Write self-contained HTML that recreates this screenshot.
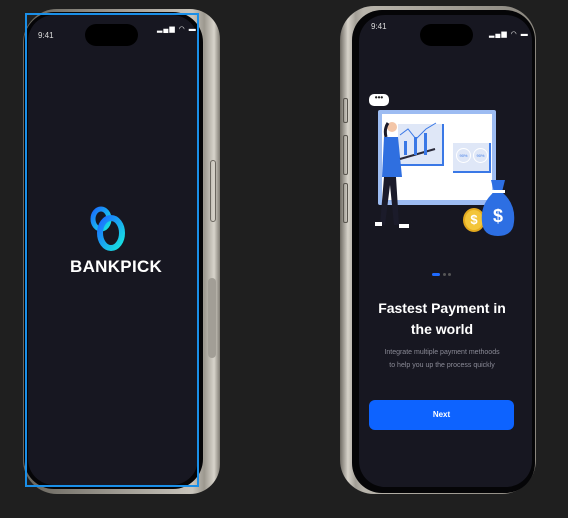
<!DOCTYPE html>
<html><head><style>
*{margin:0;padding:0;box-sizing:border-box}
body{width:568px;height:518px;background:#1f1f1f;position:relative;overflow:hidden;font-family:"Liberation Sans",sans-serif}
.a{position:absolute}
</style></head><body>
<!-- left phone frame -->
<div class="a" style="left:23px;top:9px;width:197px;height:485px;border-radius:34px 30px 30px 34px;background:linear-gradient(90deg,#6a675f 0%,#6a675f 3%,#c9c5bc 86%,#9c988f 92%,#d8d4cb 97%,#7f7b73 100%)"></div>
<div class="a" style="left:24px;top:12px;width:179px;height:477px;border-radius:30px;background:#050507"></div>
<div class="a" style="left:28px;top:15px;width:170px;height:470px;border-radius:26px;background:#171721"></div>
<div class="a" style="left:85px;top:24px;width:53px;height:22px;border-radius:11px;background:#000"></div>
<div class="a" style="left:38px;top:31px;color:#ddd;font-size:8px">9:41</div>
<div class="a" style="left:157px;top:25px;color:#fff;font-size:7px;letter-spacing:1px">▂▄▆ ◠ ▬</div>
<div class="a" style="left:210px;top:160px;width:6px;height:62px;border:1px solid #6a665f;border-radius:3px"></div>
<div class="a" style="left:208px;top:278px;width:8px;height:80px;background:#a29e96;border-radius:4px"></div>
<svg class="a" style="left:89px;top:205px" width="40" height="48" viewBox="0 0 40 48">
<defs><linearGradient id="g" x1="0" y1="0" x2="1" y2="1"><stop offset="0" stop-color="#1a6cff"/><stop offset="1" stop-color="#18e6e0"/></linearGradient></defs>
<ellipse cx="12" cy="14" rx="8" ry="10" fill="none" stroke="url(#g)" stroke-width="5"/>
<ellipse cx="22" cy="28" rx="11" ry="15" fill="none" stroke="url(#g)" stroke-width="6"/>
</svg>
<div class="a" style="left:70px;top:257px;color:#fff;font-size:17px;font-weight:bold;letter-spacing:0.3px">BANKPICK</div>
<div class="a" style="left:25px;top:13px;width:174px;height:474px;border:2px solid #1a8fe8"></div>

<!-- right phone -->
<div class="a" style="left:340px;top:6px;width:196px;height:488px;border-radius:34px;background:linear-gradient(90deg,#6f6b64 0%,#d6d2c9 4%,#a39f97 8%,#b9b5ac 12%,#8a867e 100%)"></div>
<div class="a" style="left:352px;top:10px;width:183px;height:483px;border-radius:30px;background:#050507"></div>
<div class="a" style="left:359px;top:15px;width:173px;height:472px;border-radius:26px;background:#171721"></div>
<div class="a" style="left:343px;top:98px;width:5px;height:25px;border:1px solid #5a564f;border-radius:2px"></div>
<div class="a" style="left:343px;top:135px;width:5px;height:40px;border:1px solid #5a564f;border-radius:2px"></div>
<div class="a" style="left:343px;top:183px;width:5px;height:40px;border:1px solid #5a564f;border-radius:2px"></div>
<div class="a" style="left:420px;top:24px;width:53px;height:22px;border-radius:11px;background:#000"></div>
<div class="a" style="left:371px;top:22px;color:#ddd;font-size:8px">9:41</div>
<div class="a" style="left:489px;top:30px;color:#fff;font-size:7px;letter-spacing:1px">▂▄▆ ◠ ▬</div>
<!-- illustration -->
<div class="a" style="left:369px;top:94px;width:20px;height:12px;border-radius:5px;background:#fff;color:#222;font-size:8px;line-height:7px;text-align:center;font-weight:bold">•••</div>
<div class="a" style="left:378px;top:110px;width:118px;height:95px;background:#9dbcf2;border-radius:2px"></div>
<div class="a" style="left:382px;top:114px;width:110px;height:86px;background:#fff"></div>
<div class="a" style="left:398px;top:124px;width:46px;height:42px;background:#dfe7f7;border-right:2px solid #3a78e6;border-bottom:2px solid #3a78e6"></div>
<div class="a" style="left:453px;top:143px;width:38px;height:30px;background:#dfe7f7;border-right:2px solid #3a78e6;border-bottom:2px solid #3a78e6"></div>
<div class="a" style="left:456px;top:148px;width:15px;height:15px;border-radius:50%;border:1px solid #fff;color:#3a78e6;font-size:4px;line-height:13px;text-align:center">90%</div>
<div class="a" style="left:473px;top:148px;width:15px;height:15px;border-radius:50%;border:1px solid #fff;color:#3a78e6;font-size:4px;line-height:13px;text-align:center">90%</div>
<svg class="a" style="left:370px;top:115px" width="80" height="120">
<circle cx="22" cy="12" r="5" fill="#f3c6a8"/><path d="M18 8 q-4 6 -2 14" stroke="#1b1b2a" stroke-width="3" fill="none"/>
<path d="M14 22 h14 l4 40 h-20z" fill="#2f6fe0"/>
<path d="M14 62 l-4 48 h5 l5 -40 l4 40 h5 l-3 -48z" fill="#1b1b2a"/>
<path d="M30 44 l35 -10" stroke="#2a2a3a" stroke-width="2"/>
<rect x="34" y="26" width="3" height="14" fill="#3a78e6"/><rect x="44" y="22" width="3" height="18" fill="#3a78e6"/><rect x="54" y="18" width="3" height="22" fill="#3a78e6"/>
<path d="M30 20 l8 -6 l8 10 l10 -10 l10 -6" stroke="#3a78e6" stroke-width="1" fill="none"/>
<rect x="5" y="107" width="7" height="4" fill="#fff"/><rect x="29" y="109" width="10" height="4" fill="#fff"/>
</svg>
<div class="a" style="left:463px;top:208px;width:22px;height:24px;border-radius:50%;background:#f3c53a;border:2px solid #e3a91e;color:#fff;font-size:13px;font-weight:bold;text-align:center;line-height:20px">$</div>
<svg class="a" style="left:479px;top:178px" width="38" height="60"><path d="M12 2 h14 l-3 12 q14 12 12 30 q-1 14 -16 14 q-15 0 -16 -14 q-2 -18 12 -30z" fill="#2d6fe3"/><rect x="12" y="12" width="14" height="3" fill="#fff"/><text x="19" y="44" fill="#fff" font-size="18" font-weight="bold" text-anchor="middle" font-family="Liberation Sans">$</text></svg>
<div class="a" style="left:432px;top:273px;width:8px;height:3px;border-radius:2px;background:#1f6bff"></div>
<div class="a" style="left:443px;top:273px;width:3px;height:3px;border-radius:50%;background:#555"></div>
<div class="a" style="left:448px;top:273px;width:3px;height:3px;border-radius:50%;background:#555"></div>
<div class="a" style="left:370px;top:298px;width:144px;text-align:center;color:#fff;font-size:14px;font-weight:bold;line-height:21px">Fastest Payment in<br>the world</div>
<div class="a" style="left:370px;top:346px;width:144px;text-align:center;color:#8a8a96;font-size:7px;line-height:13px">Integrate multiple payment methoods<br>to help you up the process quickly</div>
<div class="a" style="left:369px;top:400px;width:145px;height:30px;border-radius:6px;background:#0d63ff;color:#fff;font-size:8px;font-weight:bold;text-align:center;line-height:30px">Next</div>
</body></html>
